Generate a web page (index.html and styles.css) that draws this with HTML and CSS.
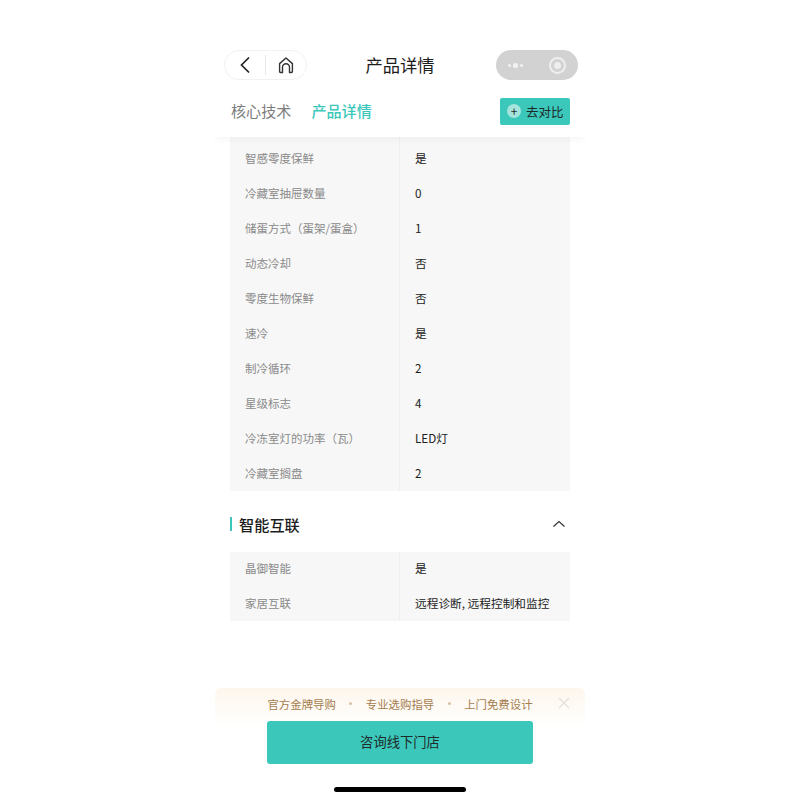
FILE: index.html
```html
<!DOCTYPE html>
<html lang="zh">
<head>
  <meta charset="UTF-8" />
  <title>产品详情</title>
  <link rel="stylesheet" href="styles.css">
</head>
<body>
  <div class="phone">
    <div class="nav">
      <div class="nav-pill">
        <svg class="nav-icon" width="16" height="20" viewBox="0 0 16 20"><path d="M12 2.500 4.500 10l7.500 7.500" fill="none" stroke="#222" stroke-width="1.700"/></svg>
        <span class="nav-sep"></span>
        <svg class="nav-icon" width="20" height="20" viewBox="0 0 20 20"><path d="M6.500 17.500H4.600c-.6 0-1-.4-1-1V8.600L10 3l6.400 5.600v7.900c0 .6-.4 1-1 1h-1.900v-5.200a3.500 3.500 0 0 0-7 0z" fill="none" stroke="#333" stroke-width="1.400" stroke-linejoin="round"/></svg>
      </div>
      <div class="nav-title">产品详情</div>
      <div class="capsule">
        <span class="dots"><i></i><i class="big"></i><i></i></span>
        <span class="target"></span>
      </div>
    </div>

    <div class="tabs">
      <span class="tab">核心技术</span>
      <span class="tab active">产品详情</span>
      <button class="compare" type="button"><span class="plus">+</span>去对比</button>
    </div>

    <div class="content">
      <div class="table first">
        <div class="row"><span class="k">智感零度保鲜</span><span class="v">是</span></div>
        <div class="row"><span class="k">冷藏室抽屉数量</span><span class="v">0</span></div>
        <div class="row"><span class="k">储蛋方式（蛋架/蛋盒）</span><span class="v">1</span></div>
        <div class="row"><span class="k">动态冷却</span><span class="v">否</span></div>
        <div class="row"><span class="k">零度生物保鲜</span><span class="v">否</span></div>
        <div class="row"><span class="k">速冷</span><span class="v">是</span></div>
        <div class="row"><span class="k">制冷循环</span><span class="v">2</span></div>
        <div class="row"><span class="k">星级标志</span><span class="v">4</span></div>
        <div class="row"><span class="k">冷冻室灯的功率（瓦）</span><span class="v">LED灯</span></div>
        <div class="row"><span class="k">冷藏室搁盘</span><span class="v">2</span></div>
      </div>

      <div class="section-head">
        <span class="bar"></span>
        <span class="section-title">智能互联</span>
        <svg class="chevron" width="14" height="10" viewBox="0 0 14 10"><path d="M1.500 7.500 7 2.500l5.500 5" fill="none" stroke="#333" stroke-width="1.200"/></svg>
      </div>

      <div class="table second">
        <div class="row"><span class="k">晶御智能</span><span class="v">是</span></div>
        <div class="row"><span class="k">家居互联</span><span class="v">远程诊断, 远程控制和监控</span></div>
      </div>
    </div>

    <div class="bottom">
      <div class="promo">
        <span>官方金牌导购</span><i></i>
        <span>专业选购指导</span><i></i>
        <span>上门免费设计</span>
        <svg class="close" width="14" height="14" viewBox="0 0 14 14"><path d="M2 2l10 10M12 2 2 12" stroke="#e4e0da" stroke-width="1.200" fill="none"/></svg>
      </div>
      <button class="consult" type="button">咨询线下门店</button>
      <div class="home-bar"></div>
    </div>
  </div>
</body>
</html>
```

FILE: styles.css
```css
:root {
  --teal: #3bc8bb;
  --panel: #f7f7f7;
}
* { box-sizing: border-box; }
body {
  margin: 0;
  background: #fff;
  font-family: "Noto Sans CJK SC", "Liberation Sans", sans-serif;
  color: #222;
}
.phone {
  width: 370px;
  height: 800px;
  margin: 0 auto;
  display: flex;
  flex-direction: column;
  overflow: hidden;
}

/* top nav */
.nav {
  display: flex;
  align-items: center;
  justify-content: space-between;
  height: 30px;
  margin-top: 50px;
  padding: 0 7px 0 9px;
}
.nav-pill {
  width: 83px;
  height: 30px;
  display: flex;
  align-items: center;
  border: 1px solid #f2f2f2;
  border-radius: 15px;
  padding-left: 12px;
}
.nav-sep {
  width: 1px;
  height: 20px;
  background: #e8e8e8;
  margin: 0 10px 0 12px;
}
.nav-title {
  font-size: 17.300px;
  line-height: 30px;
  color: #1c1c1c;
  margin-right: 3px;
}
.capsule {
  width: 82px;
  height: 30px;
  border-radius: 15px;
  background: #d2d2d2;
  display: flex;
  align-items: center;
  padding: 0 12px;
  justify-content: space-between;
}
.dots { display: flex; align-items: center; gap: 2px; }
.dots i { width: 3px; height: 3px; border-radius: 50%; background: #f2f2f2; }
.dots i.big { width: 5px; height: 5px; }
.target {
  width: 17px;
  height: 17px;
  border-radius: 50%;
  border: 2px solid #eee;
  display: flex;
  align-items: center;
  justify-content: center;
}
.target::after {
  content: "";
  width: 7px;
  height: 7px;
  border-radius: 50%;
  background: #eee;
}

/* tabs */
.tabs {
  display: flex;
  align-items: center;
  height: 57px;
  padding: 5px 15px 0 16px;
  box-shadow: 0 3px 6px rgba(0, 0, 0, 0.04);
  position: relative;
  z-index: 1;
  background: #fff;
}
.tab {
  font-size: 15.100px;
  color: #7d7d7d;
  margin-right: 20px;
  padding-bottom: 2px;
}
.tab.active { color: var(--teal); font-weight: 500; }
.compare {
  margin-left: auto;
  width: 70px;
  height: 27px;
  padding: 0 0 0 7px;
  border: none;
  border-radius: 2px;
  background: var(--teal);
  color: #1f2a29;
  font: inherit;
  font-size: 12.500px;
  display: flex;
  align-items: center;
  gap: 5px;
}
.plus {
  width: 14px;
  height: 14px;
  border-radius: 50%;
  background: #a5e5de;
  color: #1f2a29;
  font-size: 12px;
  line-height: 13px;
  text-align: center;
}

/* spec tables */
.content { padding: 0 15px; }
.table {
  background: linear-gradient(to right, var(--panel) 169px, #efefef 169px, #efefef 170px, var(--panel) 170px);
}
.table.first { padding-top: 4px; }
.row {
  display: flex;
  align-items: center;
  height: 35px;
  font-size: 12px;
  padding-bottom: 3px;
}
.table.second .row { padding-bottom: 5px; }
.table.second .row:last-child { height: 34px; padding-bottom: 4px; }
.k {
  width: 170px;
  padding-left: 15px;
  padding-top: 2px;
  font-size: 11.500px;
  color: #8a8a8a;
}
.v {
  padding-left: 15px;
  font-size: 11.700px;
  color: #222;
}
.section-head {
  display: flex;
  align-items: center;
  height: 61px;
  padding-top: 4px;
}
.bar {
  width: 2px;
  height: 14px;
  background: var(--teal);
  margin-right: 7px;
}
.section-title {
  font-size: 15.200px;
  font-weight: 500;
  color: #1c1c1c;
}
.chevron { margin-left: auto; margin-right: 4px; margin-top: 1px; }

/* bottom bar */
.bottom {
  margin-top: auto;
  display: flex;
  flex-direction: column;
  align-items: center;
}
.promo {
  width: 100%;
  height: 37px;
  margin-bottom: -4px;
  padding-bottom: 6px;
  border-radius: 6px 6px 0 0;
  background: linear-gradient(#fdf6ec, #fff);
  display: flex;
  align-items: center;
  justify-content: center;
  gap: 13.500px;
  font-size: 11.400px;
  color: #a47c4c;
  position: relative;
}
.promo i {
  width: 3px;
  height: 3px;
  border-radius: 50%;
  background: #d8c3a5;
}
.close { position: absolute; right: 14px; top: 8px; }
.consult {
  width: 266px;
  height: 43px;
  padding: 0 0 2px;
  border: none;
  border-radius: 3px;
  background: var(--teal);
  color: #1f2a29;
  font: inherit;
  font-size: 13.300px;
  position: relative;
}
.home-bar {
  width: 132px;
  height: 5px;
  border-radius: 3px;
  background: #000;
  margin: 23px 0 8px;
}
```
